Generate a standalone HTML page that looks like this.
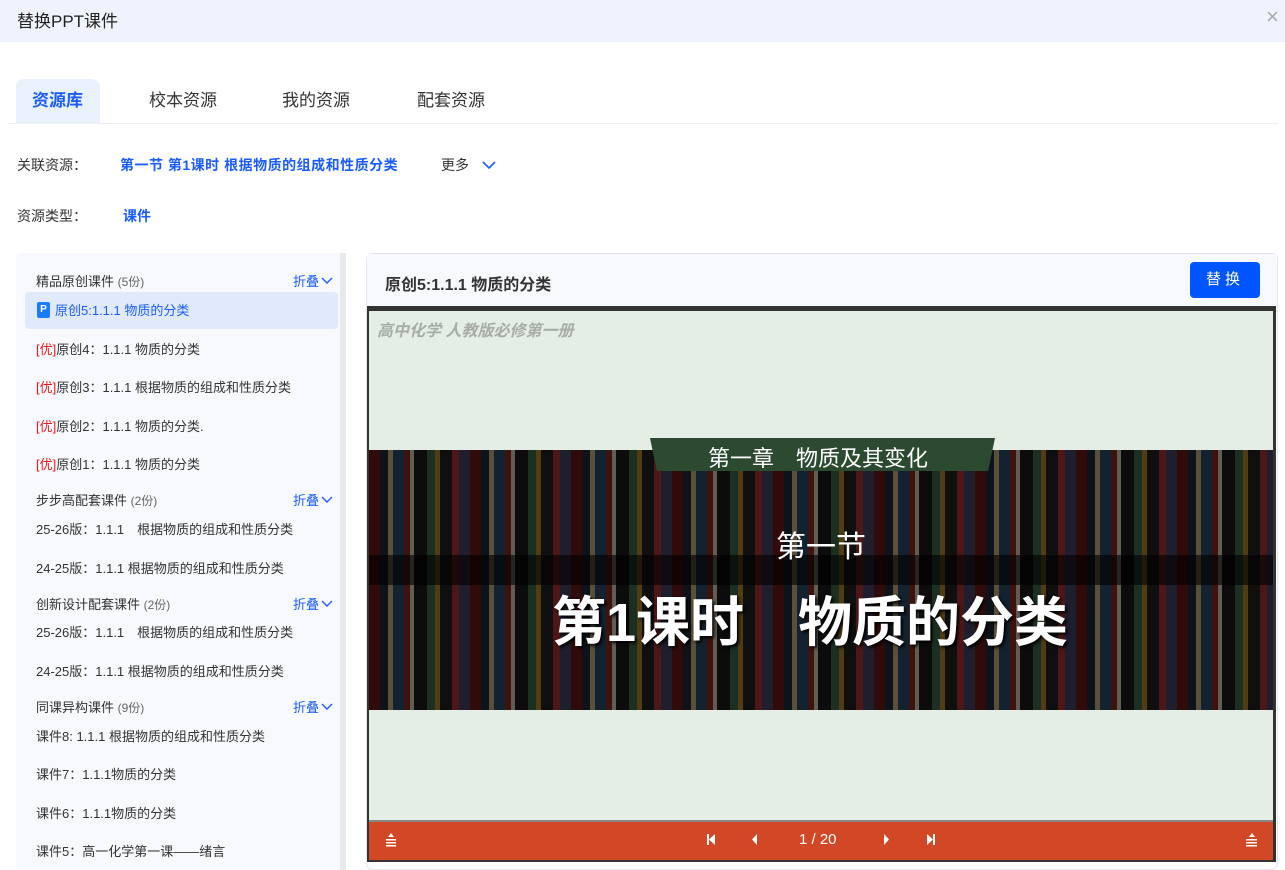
<!DOCTYPE html>
<html><head><meta charset="utf-8"><style>
*{margin:0;padding:0;box-sizing:border-box}
body{width:1285px;height:870px;overflow:hidden;background:#fff;font-family:"Liberation Sans","Noto Sans CJK SC",sans-serif;color:#333;position:relative}
.abs{position:absolute}
.hd{left:0;top:0;width:1285px;height:42px;background:#eef3fd}
.tab{top:80px;height:42px;line-height:42px;font-size:17px;color:#333}
.sm{font-size:13px}
.item{left:36px;font-size:13px;color:#333}
.y{color:#f01818}
.fold{left:293px;font-size:13px;color:#1a5cff}
.grp{left:36px;font-size:13px;color:#333}
.grp span{color:#666;font-size:12px}
</style></head><body>
<div class="abs hd"></div>
<div class="abs" style="left:17px;top:7px;font-size:17px;color:#222">替换PPT课件</div>
<div class="abs" style="left:1266px;top:4px;font-size:22px;color:#aaa;font-weight:300">×</div>
<div class="abs" style="left:16px;top:79px;width:84px;height:44px;background:#e9f1fd;border-radius:8px 8px 0 0"></div>
<div class="abs tab" style="left:32px;color:#1a5cff;font-weight:bold">资源库</div>
<div class="abs tab" style="left:149px">校本资源</div>
<div class="abs tab" style="left:282px">我的资源</div>
<div class="abs tab" style="left:417px">配套资源</div>
<div class="abs" style="left:8px;top:123px;width:1270px;height:1px;background:#eceef2"></div>
<div class="abs" style="left:17px;top:155px;font-size:14px">关联资源：</div>
<div class="abs" style="left:120px;top:155px;font-size:14px;color:#1a5cff;font-weight:bold;letter-spacing:0.5px">第一节 第1课时 根据物质的组成和性质分类</div>
<div class="abs" style="left:441px;top:155px;font-size:14px">更多</div>
<svg class="abs" style="left:481px;top:160px" width="16" height="10"><path d="M2 2l6 6 6-6" stroke="#1a5cff" stroke-width="1.6" fill="none"/></svg>
<div class="abs" style="left:17px;top:206px;font-size:14px">资源类型：</div>
<div class="abs" style="left:123px;top:206px;font-size:14px;color:#1a5cff;font-weight:bold">课件</div>

<div class="abs" style="left:16px;top:253px;width:330px;height:617px;background:#f7f9fd;border-radius:6px 0 0 0"></div>
<div class="abs" style="left:340px;top:253px;width:6px;height:617px;background:#e8e9ec"></div>
<div class="abs" style="left:25px;top:292px;width:313px;height:37px;background:#e1eafd;border-radius:4px"></div>
<div class="abs grp" style="top:271px">精品原创课件 <span>(5份)</span></div>
<div class="abs fold" style="top:271px">折叠</div>
<div class="abs" style="left:37px;top:302px;width:13px;height:16px;background:#1a7cff;border-radius:2px;color:#fff;font-size:10px;font-weight:bold;text-align:center;line-height:16px">P</div>
<div class="abs" style="left:55px;top:300px;font-size:13px;color:#1a5cff">原创5:1.1.1 物质的分类</div>
<div class="abs item" style="top:339px"><span class="y">[优]</span>原创4：1.1.1 物质的分类</div>
<div class="abs item" style="top:377px"><span class="y">[优]</span>原创3：1.1.1 根据物质的组成和性质分类</div>
<div class="abs item" style="top:416px"><span class="y">[优]</span>原创2：1.1.1 物质的分类.</div>
<div class="abs item" style="top:454px"><span class="y">[优]</span>原创1：1.1.1 物质的分类</div>
<div class="abs grp" style="top:490px">步步高配套课件 <span>(2份)</span></div>
<div class="abs fold" style="top:490px">折叠</div>
<div class="abs item" style="top:519px">25-26版：1.1.1　根据物质的组成和性质分类</div>
<div class="abs item" style="top:558px">24-25版：1.1.1 根据物质的组成和性质分类</div>
<div class="abs grp" style="top:594px">创新设计配套课件 <span>(2份)</span></div>
<div class="abs fold" style="top:594px">折叠</div>
<div class="abs item" style="top:622px">25-26版：1.1.1　根据物质的组成和性质分类</div>
<div class="abs item" style="top:661px">24-25版：1.1.1 根据物质的组成和性质分类</div>
<div class="abs grp" style="top:697px">同课异构课件 <span>(9份)</span></div>
<div class="abs fold" style="top:697px">折叠</div>
<div class="abs item" style="top:726px">课件8: 1.1.1 根据物质的组成和性质分类</div>
<div class="abs item" style="top:764px">课件7：1.1.1物质的分类</div>
<div class="abs item" style="top:803px">课件6：1.1.1物质的分类</div>
<div class="abs item" style="top:841px">课件5：高一化学第一课——绪言</div>
<svg class="abs" style="left:321px;top:277px" width="12" height="8"><path d="M1 1l5 5 5-5" stroke="#1a5cff" stroke-width="1.4" fill="none"/></svg>
<svg class="abs" style="left:321px;top:496px" width="12" height="8"><path d="M1 1l5 5 5-5" stroke="#1a5cff" stroke-width="1.4" fill="none"/></svg>
<svg class="abs" style="left:321px;top:600px" width="12" height="8"><path d="M1 1l5 5 5-5" stroke="#1a5cff" stroke-width="1.4" fill="none"/></svg>
<svg class="abs" style="left:321px;top:703px" width="12" height="8"><path d="M1 1l5 5 5-5" stroke="#1a5cff" stroke-width="1.4" fill="none"/></svg>

<div class="abs" style="left:366px;top:253px;width:912px;height:617px;border:1px solid #e3e6ee;border-radius:6px;background:#fff"></div>
<div class="abs" style="left:367px;top:254px;width:910px;height:52px;background:#f8f9fd"></div>
<div class="abs" style="left:385px;top:271px;font-size:16px;font-weight:bold;color:#333">原创5:1.1.1 物质的分类</div>
<div class="abs" style="left:1190px;top:262px;width:70px;height:36px;background:#0055ff;border-radius:4px;color:#fff;font-size:15px;text-align:center;line-height:36px;letter-spacing:4px">替换</div>
<div class="abs" style="left:367px;top:306px;width:909px;height:556px;background:#333"></div>
<div class="abs" style="left:369px;top:311px;width:904px;height:509px;background:#e4eee4"></div>
<div class="abs" style="left:377px;top:317px;font-size:16px;font-weight:bold;font-style:italic;color:#a8aca8">高中化学 人教版必修第一册</div>
<div class="abs" style="left:369px;top:450px;width:904px;height:260px;background:repeating-linear-gradient(90deg,#6b1a14 0 11px,#1d2a3a 11px 19px,#c9b07a 19px 24px,#2b4d6b 24px 35px,#8a2a20 35px 41px,#d8cfb8 41px 45px,#1b1b1b 45px 58px,#3d6b4a 58px 66px,#b8862e 66px 71px,#222 71px 83px,#a33 83px 90px,#446 90px 101px)"></div>
<div class="abs" style="left:369px;top:450px;width:904px;height:260px;background:rgba(0,0,0,0.55)"></div>
<div class="abs" style="left:369px;top:555px;width:904px;height:30px;background:rgba(0,0,0,0.6)"></div>
<div class="abs" style="left:650px;top:438px;width:345px;height:33px;background:#2c4a2f;clip-path:polygon(0 0,100% 0,98% 100%,2% 100%)"></div>
<div class="abs" style="left:708px;top:441px;font-size:22px;color:#fff">第一章　物质及其变化</div>
<div class="abs" style="left:776px;top:522px;font-size:30px;color:#fff">第一节</div>
<div class="abs" style="left:552px;top:578px;font-size:54px;font-weight:bold;color:#fff;white-space:nowrap;text-shadow:2px 2px 3px #000">第1课时　物质的分类</div>
<div class="abs" style="left:369px;top:820px;width:904px;height:40px;background:#d24826;border-top:2px solid #888"></div>
<div class="abs" style="left:799px;top:831px;font-size:15px;color:#fff">1 / 20</div>
<svg class="abs" style="left:380px;top:830px" width="890" height="20" fill="#fff">
<path d="M11 3l3 4h-6z M6 9h10v1.5h-10z M6 12h10v1.5h-10z M6 15h10v1.5h-10z"/>
<path d="M872 3l3 4h-6z M866 9h11v1.5h-11z M866 12h11v1.5h-11z M866 15h11v1.5h-11z"/>
<path d="M327 4h2v11h-2z M335 4v11l-6-5.5z"/>
<path d="M377 4v11l-5-5.5z"/>
<path d="M504 4v11l5-5.5z"/>
<path d="M547 4v11l6-5.5z M553 4h2v11h-2z"/>
</svg>
</body></html>
